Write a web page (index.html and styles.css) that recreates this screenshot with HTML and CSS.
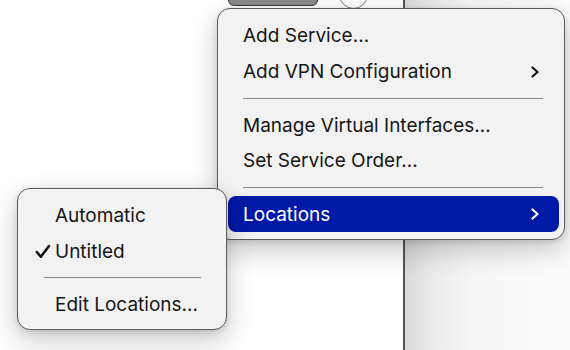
FILE: index.html
```html
<!DOCTYPE html>
<html>
<head>
<meta charset="utf-8">
<link rel="stylesheet" href="styles.css">
</head>
<body>
<div class="window">
  <div class="left">
    <div class="toolbar">
      <div class="btn"></div>
      <div class="circle"></div>
    </div>
  </div>
  <div class="divider"></div>
  <div class="right"></div>
</div>

<div class="menu main-menu">
  <div class="item">Add Service…</div>
  <div class="item"><span>Add VPN Configuration</span>
    <svg class="chev" width="10" height="12" viewBox="0 0 10 12"><polyline points="2.5,1.5 7.5,6 2.5,10.5" fill="none" stroke="currentColor" stroke-width="2.2" stroke-linecap="round" stroke-linejoin="round"/></svg>
  </div>
  <div class="sep"></div>
  <div class="item">Manage Virtual Interfaces…</div>
  <div class="item">Set Service Order…</div>
  <div class="sep"></div>
  <div class="item active"><span>Locations</span>
    <svg class="chev" width="10" height="12" viewBox="0 0 10 12"><polyline points="2.5,1.5 7.5,6 2.5,10.5" fill="none" stroke="currentColor" stroke-width="2.2" stroke-linecap="round" stroke-linejoin="round"/></svg>
  </div>
</div>

<div class="menu sub-menu">
  <div class="item">Automatic</div>
  <div class="item checked">
    <svg class="check" width="16" height="15" viewBox="0 0 16 15"><polyline points="1.8,8 5.8,12.8 14,2" fill="none" stroke="currentColor" stroke-width="2.5" stroke-linecap="round" stroke-linejoin="round"/></svg>
    <span>Untitled</span>
  </div>
  <div class="sep"></div>
  <div class="item">Edit Locations…</div>
</div>
</body>
</html>
```

FILE: styles.css
```css
html, body {
  margin: 0;
  padding: 0;
  width: 570px;
  height: 350px;
  overflow: hidden;
  background: #ffffff;
  font-family: "Inter", "Liberation Sans", sans-serif;
}

.window {
  display: flex;
  height: 350px;
}

.left {
  width: 403px;
  background: #ffffff;
}

.toolbar {
  display: flex;
  align-items: flex-end;
  margin-top: -20px;
  padding-left: 228px;
  gap: 21px;
}

.btn {
  width: 88px;
  height: 21px;
  border: 1px solid #3c3c3c;
  border-radius: 6px;
  background: #8a8a8a;
}

.circle {
  width: 27px;
  height: 27px;
  border: 1px solid #7a7a7a;
  border-radius: 50%;
  background: #ffffff;
  margin-bottom: -3px;
}

.divider {
  width: 1.5px;
  background: #555555;
}

.right {
  flex: 1;
  background: linear-gradient(90deg, #d9d9d9 0px, #ececec 30px, #f7f7f7 70px, #fcfcfc 140px);
}

.menu {
  position: absolute;
  box-sizing: border-box;
  background: #f2f2f2;
  border: 1px solid #5a5a5a;
  border-radius: 13px;
  box-shadow: 0 0 0 0.5px rgba(255,255,255,0.6) inset, 0 10px 28px rgba(0,0,0,0.22), 0 2px 6px rgba(0,0,0,0.12);
  color: #161616;
  font-size: 19px;
  display: flex;
  flex-direction: column;
}

.main-menu {
  left: 217px;
  top: 8px;
  width: 348px;
  height: 232px;
  padding: 9px 5px 7px 10px;
}

.sub-menu {
  left: 17px;
  top: 188px;
  width: 210px;
  height: 142px;
  padding: 9px 5px 7px 5px;
}

.item {
  height: 36px;
  display: flex;
  align-items: center;
  justify-content: space-between;
  padding: 0 19px 0 15px;
  border-radius: 8px;
}

.sub-menu .item {
  justify-content: flex-start;
  padding: 0 8px 0 32px;
}

.sub-menu .item.checked {
  padding-left: 12px;
}

.check {
  margin-right: 4px;
  color: #111;
}

.item.active {
  background: #0019a6;
  color: #ffffff;
}

.chev {
  color: #111;
}

.item.active .chev {
  color: #ffffff;
}

.sep {
  height: 18px;
  display: flex;
  align-items: center;
  padding: 0 16px 0 15px;
}

.sep::before {
  content: "";
  flex: 1;
  height: 1px;
  background: #8a8a8a;
}

.sub-menu .sep {
  padding: 0 20px 0 21px;
}
```
